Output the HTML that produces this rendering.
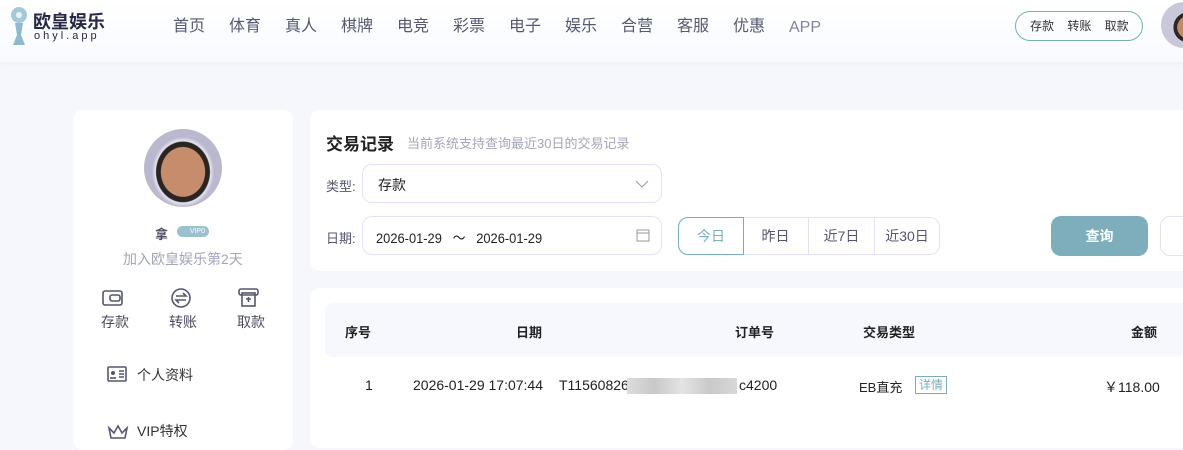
<!DOCTYPE html>
<html><head><meta charset="utf-8"><style>
*{margin:0;padding:0;box-sizing:border-box}
body{width:1183px;height:440px;overflow:hidden;background:#f5f7fc;font-family:"Liberation Sans","Noto Sans CJK SC",sans-serif;position:relative;color:#333}
.hdr{position:absolute;left:0;top:0;width:1183px;height:62px;background:linear-gradient(#fff,#f8faff);box-shadow:0 2px 6px rgba(0,0,0,.03)}
.a{position:absolute}
.nav{font-size:16px;color:#555a6e;top:17px;line-height:20px}
.card{position:absolute;background:#fff;border-radius:10px}
.ic{stroke:#55576e;fill:none;stroke-width:1.6}
.box{position:absolute;border:1px solid #dfe4f5;border-radius:10px;background:#fff}
.th{position:absolute;top:322px;font-size:13px;font-weight:bold;color:#222}
.td{position:absolute;top:377px;font-size:14px;color:#222}
.nar{display:inline-block;transform:scaleX(.92);transform-origin:left}
</style></head><body>
<div class="hdr">
<svg class="a" style="left:8px;top:5px" width="22" height="44" viewBox="0 0 22 44"><circle cx="11" cy="10" r="8" fill="#a6c9da"/><circle cx="11" cy="10" r="3" fill="#e9f3f8"/><path d="M7 18 L9 30 L5 40 L17 40 L13 30 L15 18Z" fill="#8fb9cd"/></svg>
<div class="a" style="left:33px;top:8px;font-size:18px;font-weight:bold;color:#262a45">欧皇娱乐</div>
<div class="a" style="left:34px;top:30px;font-size:11px;letter-spacing:3px;color:#262a45">ohyl.app</div>
<div class="a nav" style="left:173px">首页</div><div class="a nav" style="left:229px">体育</div><div class="a nav" style="left:285px">真人</div><div class="a nav" style="left:341px">棋牌</div><div class="a nav" style="left:397px">电竞</div><div class="a nav" style="left:453px">彩票</div><div class="a nav" style="left:509px">电子</div><div class="a nav" style="left:565px">娱乐</div><div class="a nav" style="left:621px">合营</div><div class="a nav" style="left:677px">客服</div><div class="a nav" style="left:733px">优惠</div><div class="a nav" style="left:789px;color:#80849a;top:18px">APP</div>
<div class="a" style="left:1015px;top:11px;width:128px;height:30px;border:1px solid #7aaebb;border-radius:15px;font-size:12px;color:#333;line-height:28px;padding-left:14px;word-spacing:10px">存款 转账 取款</div>
<div class="a" style="left:1161px;top:2px;width:46px;height:46px;border-radius:50%;background:radial-gradient(circle at 60% 55%,#c08a6a 0 30%,#2b2525 31% 40%,#c9c8da 41%)"></div>
</div>

<div class="card" style="left:73px;top:110px;width:220px;height:340px">
<div class="a" style="left:71px;top:19px;width:78px;height:78px;border-radius:50%;background:radial-gradient(ellipse 40% 45% at 50% 55%,#c58d6c 0 70%,#2a2523 72% 85%,#e6e6f0 88%,#b9b8cf 100%)"></div>
<div class="a" style="left:82px;top:114px;font-size:13px;font-weight:bold;color:#4a4c60">拿</div>
<div class="a" style="left:104px;top:116px;width:32px;height:11px;border-radius:6px;background:#9bc1d0;font-size:7px;color:#fff;line-height:11px;text-align:right;padding-right:4px">VIP0</div>
<div class="a" style="left:50px;top:139px;font-size:14px;color:#a3a6ba">加入欧皇娱乐第2天</div>
<svg class="a" style="left:28px;top:178px" width="24" height="20"><rect class="ic" x="2" y="3" width="19" height="14" rx="2"/><rect class="ic" x="9" y="7" width="10" height="6" rx="2"/></svg>
<svg class="a" style="left:97px;top:177px" width="22" height="22"><circle class="ic" cx="11" cy="11" r="9"/><path class="ic" d="M6 9h10l-3-3M16 13H6l3 3"/></svg>
<svg class="a" style="left:164px;top:177px" width="24" height="22"><rect class="ic" x="2" y="2" width="19" height="6" rx="2"/><rect class="ic" x="5" y="6" width="13" height="13"/><path class="ic" d="M9 12h5M11.5 10v5"/></svg>
<div class="a" style="left:28px;top:202px;font-size:14px;color:#4a4c60">存款</div>
<div class="a" style="left:96px;top:202px;font-size:14px;color:#4a4c60">转账</div>
<div class="a" style="left:164px;top:202px;font-size:14px;color:#4a4c60">取款</div>
<svg class="a" style="left:34px;top:256px" width="20" height="16"><rect class="ic" x="1" y="1" width="18" height="14" rx="1"/><circle cx="6" cy="7" r="2" fill="#55576e"/><path d="M3 12h6" class="ic"/><path class="ic" d="M12 5h5M12 8h5M12 11h5"/></svg>
<div class="a" style="left:64px;top:255px;font-size:14px;color:#333">个人资料</div>
<svg class="a" style="left:34px;top:312px" width="22" height="18"><path class="ic" d="M2 6l5 5 4-7 4 7 5-5-2 10H4z"/></svg>
<div class="a" style="left:64px;top:311px;font-size:14px;color:#333">VIP特权</div>
</div>

<div class="card" style="left:310px;top:110px;width:890px;height:161px">
<div class="a" style="left:16px;top:20px;font-size:17px;font-weight:bold;color:#222">交易记录</div>
<div class="a" style="left:97px;top:23px;font-size:13px;color:#a3a6ba">当前系统支持查询最近30日的交易记录</div>
<div class="a" style="left:16px;top:66px;font-size:13px;color:#55576e">类型:</div>
<div class="box" style="left:52px;top:54px;width:300px;height:39px"><span class="a" style="left:15px;top:10px;font-size:14px;color:#222">存款</span><svg class="a" style="left:272px;top:14px" width="14" height="10"><path d="M1 2l6 6 6-6" stroke="#999" fill="none"/></svg></div>
<div class="a" style="left:16px;top:118px;font-size:13px;color:#55576e">日期:</div>
<div class="box" style="left:52px;top:106px;width:300px;height:39px"><span class="a nar" style="left:13px;top:11px;font-size:14px;color:#222;white-space:pre">2026-01-29   ～   2026-01-29</span><svg class="a" style="left:273px;top:12px" width="14" height="13"><rect x="1" y="1" width="12" height="11" fill="none" stroke="#999"/><path d="M1 4h12" stroke="#999"/></svg></div>
<div class="a" style="left:368px;top:107px;width:262px;height:38px;border:1px solid #dfe4f5;border-radius:10px;background:#fff;display:flex;font-size:14px;color:#55576e">
<div style="width:66px;border:1px solid #7aaebb;border-radius:10px 0 0 10px;margin:-1px;text-align:center;line-height:36px;color:#7aaebb">今日</div>
<div style="width:66px;border-right:1px solid #dfe4f5;text-align:center;line-height:36px">昨日</div>
<div style="width:66px;border-right:1px solid #dfe4f5;text-align:center;line-height:36px">近7日</div>
<div style="width:64px;text-align:center;line-height:36px">近30日</div></div>
<div class="a" style="left:741px;top:106px;width:97px;height:40px;border-radius:10px;background:#7eaebb;color:#fff;font-size:14px;text-align:center;line-height:40px;font-weight:bold">查询</div>
<div class="box" style="left:850px;top:106px;width:60px;height:40px"></div>
</div>

<div class="card" style="left:310px;top:288px;width:890px;height:160px">
<div class="a" style="left:15px;top:15px;width:880px;height:54px;background:#f6f8fd;border-radius:8px"></div>
</div>
<div class="th" style="left:345px">序号</div>
<div class="th" style="left:516px">日期</div>
<div class="th" style="left:735px">订单号</div>
<div class="th" style="left:863px">交易类型</div>
<div class="th" style="left:1131px">金额</div>
<div class="td" style="left:365px">1</div>
<div class="td" style="left:413px">2026-01-29 17:07:44</div>
<div class="td" style="left:559px">T11560826</div>
<div class="td" style="left:739px">c4200</div>
<div class="a" style="left:627px;top:378px;width:110px;height:16px;background:linear-gradient(90deg,#ddd,#c8c8c8,#e4e4e4,#c9c9c9,#d8d8d8)"></div>
<div class="td" style="left:859px;font-size:13px">EB直充</div>
<div class="a" style="left:915px;top:376px;width:32px;height:18px;border:1px solid #7aaebb;font-size:12px;color:#7aaebb;text-align:center;line-height:16px">详情</div>
<div class="td" style="left:1104px">￥118.00</div>
</body></html>
